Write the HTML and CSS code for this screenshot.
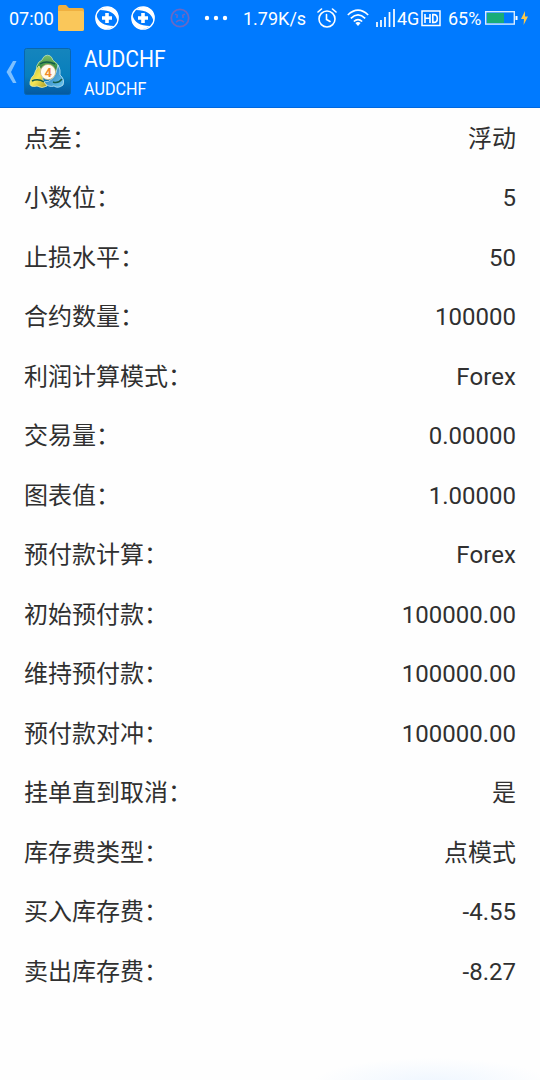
FILE: index.html
```
<!DOCTYPE html>
<html lang="zh-CN">
<head>
	<meta charset="UTF-8">
	<meta name="viewport" content="width=device-width, initial-scale=1.0">
	<title>AUDCHF</title>
	<link rel="stylesheet" href="styles.css">
</head>
<body>
	<header class="top">
		<div class="status-bar">
			<span class="clock">07:00</span>
			<svg class="folder" width="27" height="27" viewBox="0 0 27 27">
				<path d="M0 2 Q0 0 2 0 H8 L11 3 H24 Q26 3 26 5 V24 Q26 26 24 26 H2 Q0 26 0 24Z" fill="#f0b040"/>
				<path d="M0 6 H24 Q26 6 26 8 V24 Q26 26 24 26 H2 Q0 26 0 24Z" fill="#fac75a"/>
			</svg>
			<svg class="plus" width="26" height="26" viewBox="0 0 26 26">
				<circle cx="13" cy="13" r="11.2" fill="none" stroke="#fff" stroke-width="1.3"/>
				<path d="M6 5 Q15 -2 22 6 Q25 10 23.5 16 Q21 5 6 5Z M20 21 Q11 28 4 20 Q1 16 2.5 10 Q5 21 20 21Z" fill="#fff"/>
				<path d="M13 8V18M8 13H18" stroke="#fff" stroke-width="3.6"/>
			</svg>
			<svg class="plus" width="26" height="26" viewBox="0 0 26 26">
				<circle cx="13" cy="13" r="11.2" fill="none" stroke="#fff" stroke-width="1.3"/>
				<path d="M6 5 Q15 -2 22 6 Q25 10 23.5 16 Q21 5 6 5Z M20 21 Q11 28 4 20 Q1 16 2.5 10 Q5 21 20 21Z" fill="#fff"/>
				<path d="M13 8V18M8 13H18" stroke="#fff" stroke-width="3.6"/>
			</svg>
			<svg class="sad" width="20" height="20" viewBox="0 0 20 20" fill="none" stroke="#6a68c4" stroke-width="1.7">
				<circle cx="10" cy="10" r="8.7"/>
				<path d="M5 6.2 L8 7.6M15 6.2L12 7.6M6 9H8M12 9H14M6 14.2Q10 10.4 14 14.2" stroke-width="1.4"/>
			</svg>
			<svg class="dots" width="24" height="6" viewBox="0 0 24 6" fill="#fff">
				<circle cx="3" cy="3" r="2.2"/><circle cx="12" cy="3" r="2.2"/><circle cx="21" cy="3" r="2.2"/>
			</svg>
			<span class="speed">1.79K/s</span>
			<svg class="alarm" width="20" height="20" viewBox="0 0 20 20" fill="none" stroke="#fff" stroke-width="1.6" stroke-linecap="round">
				<circle cx="10" cy="11" r="8"/>
				<path d="M9.5 6.5V11.5L13 13.5M1 4L4.5 1M19 4L15.5 1"/>
			</svg>
			<svg class="wifi" width="22" height="18" viewBox="0 0 22 18" fill="none" stroke="#fff" stroke-width="1.6">
				<path d="M.8 6Q11 -3.6 21.2 6M3.8 9.3Q11 2.6 18.2 9.3M6.8 12.5Q11 8.6 15.2 12.5"/>
				<path d="M8.4 14Q11 12 13.6 14L11 17Z" fill="#fff" stroke="none"/>
			</svg>
			<svg class="signal" width="20" height="18" viewBox="0 0 20 18" stroke="#fff" stroke-width="1.7">
				<path d="M1 18V13M5 18V11M9 18V8M13.5 18V3M18 18V0"/>
			</svg>
			<span class="net">4G</span>
			<svg class="hd" width="20" height="17" viewBox="0 0 20 17" fill="none" stroke="#fff">
				<rect x="1" y="1" width="18" height="14.5" stroke-width="1.5"/>
				<path d="M4 4V13M9 4V13M4 8.3H9M11.8 4V13M11 4.6H13Q16.3 4.6 16.3 8.5T13 12.4H11" stroke-width="1.6"/>
			</svg>
			<span class="percent">65%</span>
			<svg class="battery" width="33" height="14" viewBox="0 0 33 14">
				<rect x=".7" y=".7" width="28.6" height="12.4" fill="none" stroke="#d9ecff" stroke-width="1.4"/>
				<rect x="2" y="2" width="17" height="10" fill="#19ac79"/>
				<rect x="30.5" y="5" width="2" height="4" fill="#fff"/>
			</svg>
			<svg class="bolt" width="7" height="14" viewBox="0 0 7 14">
				<path d="M4 0L0 8H3L2.6 14L7 5.6H4Z" fill="#f9c74b"/>
			</svg>
		</div>
		<div class="title-bar">
			<svg class="back" width="11" height="22" viewBox="0 0 11 22">
				<path d="M7 0H10.5L5 11L10.5 22H7L.5 11Z" fill="#7dc0ff"/>
			</svg>
			<svg class="logo" width="47" height="47" viewBox="0 0 47 47">
				<defs>
					<linearGradient id="tile" x1="0" y1="0" x2="0" y2="1">
						<stop offset="0" stop-color="#1585bd"/>
						<stop offset=".6" stop-color="#087fbd"/>
						<stop offset="1" stop-color="#0458a0"/>
					</linearGradient>
					<linearGradient id="green" x1="0" y1="0" x2="0" y2="1">
						<stop offset="0" stop-color="#7fbf6a"/>
						<stop offset="1" stop-color="#1d7a34"/>
					</linearGradient>
					<linearGradient id="yellow" x1="0" y1="0" x2="1" y2="1">
						<stop offset="0" stop-color="#b3bd2b"/>
						<stop offset=".5" stop-color="#f7e657"/>
						<stop offset="1" stop-color="#a8981f"/>
					</linearGradient>
					<linearGradient id="blue" x1="0" y1="0" x2="1" y2="1">
						<stop offset="0" stop-color="#1a68ad"/>
						<stop offset="1" stop-color="#69c6ee"/>
					</linearGradient>
				</defs>
				<rect x=".5" y=".5" width="46" height="46" rx="2" fill="url(#tile)" stroke="#0966ae"/>
				<g stroke-width=".8">
					<path d="M19 10A5 5 0 0 1 28 10Q28 12 31 14Q36 17 35 24H13Q11 18 15 14Q19 12 19 10Z" fill="url(#green)" stroke="#c2e2b3"/>
					<path d="M34 17Q37 22 36 27Q41 31 39 37Q34 41 30 38Q25 40 19 34Q31 35 34 17Z" fill="url(#blue)" stroke="#bfe4f4"/>
					<path d="M15 18Q18 23 18 27Q18 33 23 38Q18 41 13 38Q5 40 6 34Q7 29 10 27Q11 22 15 18Z" fill="url(#yellow)" stroke="#e9ecb0"/>
				</g>
				<path d="M16 16Q22 12 31 16M8 33Q14 30 20 34M29 34Q34 36 38 31" fill="none" stroke="#135b4a" stroke-width="1.4"/>
				<circle cx="24" cy="24" r="7.6" fill="#fffaf0" stroke="#c9b47c" stroke-width=".8"/>
				<text class="logo-num" x="24.2" y="28.8" text-anchor="middle">4</text>
			</svg>
			<div class="titles">
				<h1>AUDCHF</h1>
				<h2>AUDCHF</h2>
			</div>
		</div>
	</header>

	<main class="details">
		<div class="row"><span>点差：</span><span>浮动</span></div>
		<div class="row"><span>小数位：</span><span>5</span></div>
		<div class="row"><span>止损水平：</span><span>50</span></div>
		<div class="row"><span>合约数量：</span><span>100000</span></div>
		<div class="row"><span>利润计算模式：</span><span>Forex</span></div>
		<div class="row"><span>交易量：</span><span>0.00000</span></div>
		<div class="row"><span>图表值：</span><span>1.00000</span></div>
		<div class="row"><span>预付款计算：</span><span>Forex</span></div>
		<div class="row"><span>初始预付款：</span><span>100000.00</span></div>
		<div class="row"><span>维持预付款：</span><span>100000.00</span></div>
		<div class="row"><span>预付款对冲：</span><span>100000.00</span></div>
		<div class="row"><span>挂单直到取消：</span><span>是</span></div>
		<div class="row"><span>库存费类型：</span><span>点模式</span></div>
		<div class="row"><span>买入库存费：</span><span>-4.55</span></div>
		<div class="row"><span>卖出库存费：</span><span>-8.27</span></div>
	</main>
</body>
</html>
```
FILE: styles.css
```
* {
	box-sizing: border-box;
}
body {
	margin: 0;
	height: 1080px;
	overflow: hidden;
	font-family: Roboto, "Noto Sans CJK SC", sans-serif;
	font-kerning: none;
	color: #303030;
	background: radial-gradient(ellipse 120px 26px at 432px 1084px, #eef6ff, #fefefe) #fefefe;
}
.top {
	height: 108px;
	background-color: #007aff;
	border-bottom: 1px solid #0068df;
	color: #fff;
}
.status-bar {
	display: flex;
	align-items: center;
	height: 36px;
	padding-left: 9px;
	font-size: 18px;
	line-height: 36px;
	white-space: nowrap;
}
.status-bar svg {
	flex: none;
}
.status-bar span {
	padding-top: 1px;
}
.clock {
	width: 49px;
}
.folder {
	margin-right: 9px;
}
.plus {
	margin-right: 10px;
}
.sad {
	margin-left: 4px;
}
.dots {
	margin-left: 14px;
}
.speed {
	width: 64px;
	margin-left: 15px;
}
.alarm {
	margin-left: 10px;
}
.wifi {
	margin-left: 10px;
}
.signal {
	margin: 0 1px 0 7px;
}
.net {
	width: 23px;
}
.hd {
	margin-left: 1px;
}
.percent {
	width: 33px;
	margin-left: 7px;
}
.battery {
	margin-left: 4px;
}
.bolt {
	margin-left: 3px;
}
.title-bar {
	display: flex;
	align-items: center;
	height: 71px;
	padding-left: 6px;
}
.logo {
	margin-left: 7px;
}
.logo-num {
	font-family: Roboto, sans-serif;
	font-size: 13px;
	font-weight: bold;
	fill: #f08a2c;
}
.titles {
	margin-left: 13px;
	padding-top: 3px;
}
.titles h1, .titles h2 {
	margin: 0;
	font-weight: normal;
	transform-origin: left;
}
.titles h1 {
	font-size: 24.5px;
	line-height: 32px;
	transform: scaleX(0.86);
}
.titles h2 {
	font-size: 18.5px;
	line-height: 28px;
	transform: scaleX(0.87);
}
.details {
	padding: 1px 24px 0;
}
.row {
	display: flex;
	justify-content: space-between;
	align-items: center;
	height: 59.53px;
	font-size: 24px;
	line-height: 36px;
}
```
